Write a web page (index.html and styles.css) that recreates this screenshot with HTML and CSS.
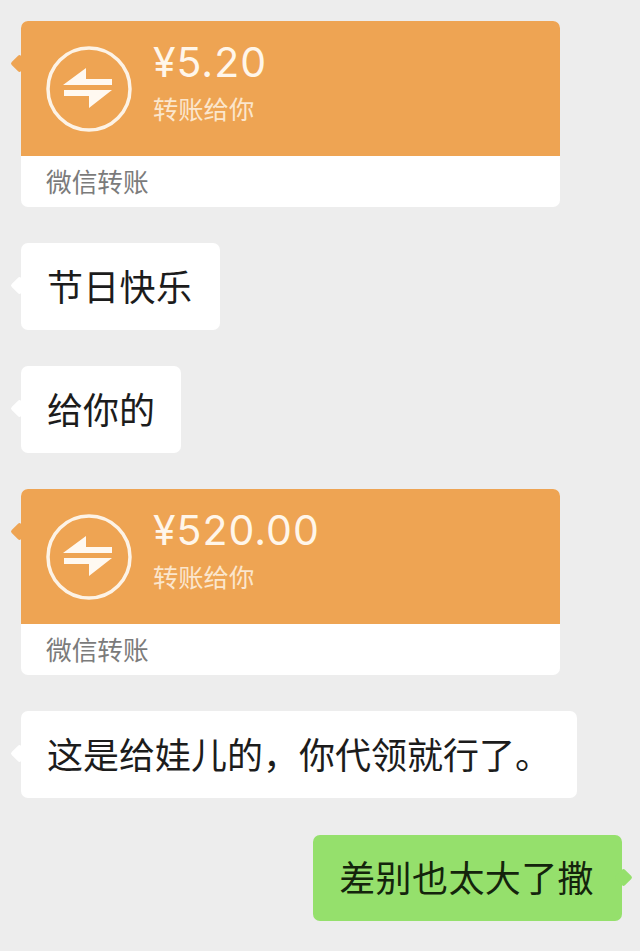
FILE: index.html
```html
<!DOCTYPE html>
<html lang="zh-CN">
<head>
    <meta charset="UTF-8">
    <meta name="viewport" content="width=device-width, initial-scale=1.0">
    <title>微信转账</title>
    <link rel="stylesheet" href="styles.css">
</head>
<body>
    <div class="chat">
        <div class="bubble transfer">
            <div class="transfer-top">
                <svg class="transfer-icon" viewBox="0 0 86 86">
                    <circle cx="43" cy="43" r="41" fill="none" stroke="#fdf3e6" stroke-width="3.500"/>
                    <path d="M17 39L40 22V33H66V39Z" fill="#fff9f1"/>
                    <path d="M18 44H66L43 62V50H18Z" fill="#fff9f1"/>
                </svg>
                <div>
                    <div class="amount">¥5.20</div>
                    <div class="transfer-note">转账给你</div>
                </div>
            </div>
            <div class="transfer-foot">微信转账</div>
        </div>

        <div class="bubble text short">节日快乐</div>
        <div class="bubble text">给你的</div>

        <div class="bubble transfer">
            <div class="transfer-top">
                <svg class="transfer-icon" viewBox="0 0 86 86">
                    <circle cx="43" cy="43" r="41" fill="none" stroke="#fdf3e6" stroke-width="3.500"/>
                    <path d="M17 39L40 22V33H66V39Z" fill="#fff9f1"/>
                    <path d="M18 44H66L43 62V50H18Z" fill="#fff9f1"/>
                </svg>
                <div>
                    <div class="amount">¥520.00</div>
                    <div class="transfer-note">转账给你</div>
                </div>
            </div>
            <div class="transfer-foot">微信转账</div>
        </div>

        <div class="bubble text">这是给娃儿的，你代领就行了。</div>
        <div class="bubble text short mine">差别也太大了撒</div>
    </div>
</body>
</html>
```

FILE: styles.css
```css
html, body {
    margin: 0;
    background: #ededed;
}
body {
    font-family: "Noto Sans CJK SC", "Noto Sans", sans-serif;
    height: 951px;
    overflow: hidden;
}
.chat {
    display: flex;
    flex-direction: column;
    align-items: flex-start;
    gap: 36px;
    padding: 21px 18px 0 21px;
}
.bubble {
    position: relative;
    background: #fff;
    border-radius: 7px;
}
.bubble::before {
    content: "";
    position: absolute;
    left: -8px;
    top: 36px;
    width: 13px;
    height: 13px;
    background: #fff;
    transform: rotate(45deg);
    border-radius: 2px;
}
.text {
    height: 87px;
    box-sizing: border-box;
    padding: 0 26px;
    font-size: 36px;
    line-height: 85px;
    color: #1c1c1c;
}
.short {
    letter-spacing: 0.300px;
    padding-right: 28px;
}
.mine {
    align-self: flex-end;
    background: #95e06c;
    color: #14240c;
    height: 86px;
    line-height: 83px;
    margin-top: 1px;
    padding: 0 28px 0 26px;
    letter-spacing: 0.400px;
}
.mine::before {
    left: auto;
    right: -8px;
    background: #95e06c;
}
.transfer {
    width: 539px;
    height: 186px;
}
.transfer::before {
    background: #eea453;
}
.transfer-top {
    position: relative;
    display: flex;
    align-items: flex-start;
    gap: 21px;
    height: 135px;
    box-sizing: border-box;
    padding: 25px 0 0 25px;
    background: #eea453;
    border-radius: 7px 7px 0 0;
}
.transfer-icon {
    width: 86px;
    height: 86px;
    flex: none;
}
.amount {
    margin-top: -8px;
    font-family: Inter, "Liberation Sans", sans-serif;
    font-weight: 400;
    font-size: 41px;
    letter-spacing: 1px;
    line-height: 48px;
    color: #fff6ea;
}
.transfer-note {
    margin-top: 4px;
    font-size: 25.300px;
    line-height: 36px;
    color: #fbe6cd;
}
.transfer-foot {
    height: 51px;
    padding-left: 25px;
    font-size: 25.700px;
    line-height: 49px;
    color: #7b7b7b;
}
```
